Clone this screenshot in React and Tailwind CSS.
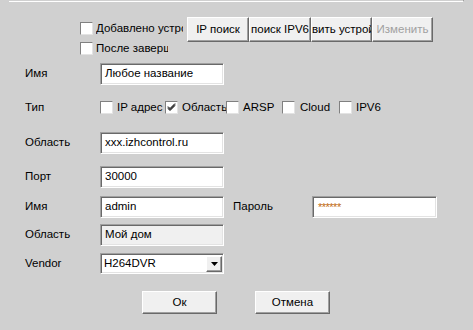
import React from 'react';

const sunken =
  'border border-t-[#a0a0a0] border-l-[#a0a0a0] border-r-white border-b-white shadow-[inset_1px_1px_0_#696969,inset_-1px_-1px_0_#e3e3e3]';
const raised =
  'bg-[#f0f0f0] border border-t-white border-l-white border-r-[#696969] border-b-[#696969] shadow-[inset_-1px_-1px_0_#a0a0a0]';

function Box({ checked = false }) {
  return (
    <span className="relative w-[13px] h-[13px] shrink-0 bg-white border border-t-[#808080] border-l-[#808080] border-r-[#e3e3e3] border-b-[#e3e3e3]">
      {checked && (
        <svg className="absolute left-[1px] top-[1px]" width="9" height="9" viewBox="0 0 9 9">
          <path d="M1 3.5 L3 5.5 L8 0.5 M1 4.5 L3 6.5 L8 1.5 M1 5.5 L3 7.5 L8 2.5" stroke="#000" strokeWidth="1" fill="none" />
        </svg>
      )}
    </span>
  );
}

function Field({ value, w = 'w-[124px]', bg = 'bg-white', h = 'h-[22px]' }) {
  return (
    <div className={`${w} ${h} ${bg} ${sunken} flex items-center pl-[4px] text-black whitespace-nowrap overflow-hidden`}>
      {value}
    </div>
  );
}

function Btn({ label, w, disabled = false, h = 'h-[25px]' }) {
  return (
    <div
      className={`${w} ${h} ${raised} flex items-center justify-center overflow-hidden whitespace-nowrap ${
        disabled ? 'text-[#a0a0a0]' : 'text-black'
      }`}
    >
      {label}
    </div>
  );
}

function Row({ label, children, className = '' }) {
  return (
    <div className={`flex items-center h-[22px] ${className}`}>
      <div className="w-[100px] pl-[25px] text-black">{label}</div>
      {children}
    </div>
  );
}

export default function App() {
  return (
    <div className="w-[473px] h-[330px] bg-[#d0d0d0] overflow-hidden font-['Liberation_Sans',Arial,sans-serif] text-[11.5px] leading-none">
      <div className="ml-[9px] w-[455px] h-[2px] border-b border-b-white border-r border-r-[#a0a0a0]" />

      <div className="flex items-start h-[23px] mt-[15px] pl-[80px]">
        <div className="w-[107px] h-[13px] mt-[5px] flex items-center gap-[3px]">
          <Box />
          <span className="w-[87px] overflow-hidden whitespace-nowrap">Добавлено устройство</span>
        </div>
        <Btn label="IP поиск" w="w-[62px]" />
        <Btn label="поиск IPV6" w="w-[62px]" />
        <Btn label="Добавить устройство" w="w-[61px]" />
        <Btn label="Изменить" w="w-[61px]" disabled />
      </div>

      <div className="flex items-center h-[13px] mt-[2px] pl-[80px] gap-[3px]">
        <Box />
        <span className="w-[72px] overflow-hidden whitespace-nowrap">После завершения</span>
      </div>

      <Row label="Имя" className="mt-[8px]">
        <Field value="Любое название" />
      </Row>

      <div className="flex items-center h-[13px] mt-[16px]">
        <div className="w-[100px] pl-[25px]">Тип</div>
        <div className="w-[65px] flex items-center gap-[4px]">
          <Box />
          <span className="whitespace-nowrap">IP адрес</span>
        </div>
        <div className="w-[61px] flex items-center gap-[4px]">
          <Box checked />
          <span className="whitespace-nowrap">Область</span>
        </div>
        <div className="w-[56px] flex items-center gap-[4px]">
          <Box />
          <span>ARSP</span>
        </div>
        <div className="w-[57px] flex items-center gap-[5px]">
          <Box />
          <span>Cloud</span>
        </div>
        <div className="flex items-center gap-[4px]">
          <Box />
          <span>IPV6</span>
        </div>
      </div>

      <Row label="Область" className="mt-[18px]">
        <Field value="xxx.izhcontrol.ru" />
      </Row>

      <Row label="Порт" className="mt-[12px]">
        <Field value="30000" />
      </Row>

      <Row label="Имя" className="mt-[8px]">
        <Field value="admin" />
        <div className="w-[88px] pl-[9px]">Пароль</div>
        <Field value={<span className="text-[11px] text-[#c06a10] tracking-[-0.5px] pl-[1px]">******</span>} w="w-[125px]" />
      </Row>

      <Row label="Область" className="mt-[6px]">
        <Field value="Мой дом" bg="bg-[#f0f0f0]" />
      </Row>

      <div className="flex items-center h-[21px] mt-[7px]">
        <div className="w-[100px] pl-[25px]">Vendor</div>
        <div className={`w-[124px] h-[21px] bg-white ${sunken} flex items-center justify-between pl-[3px] pr-[1px]`}>
          <span>H264DVR</span>
          <div className={`w-[16px] h-[16px] ${raised} flex items-center justify-center`}>
            <svg width="7" height="4" viewBox="0 0 7 4">
              <path d="M0 0 H7 L3.5 4 Z" fill="#000" />
            </svg>
          </div>
        </div>
      </div>

      <div className="flex mt-[17px] pl-[142px] gap-[38px]">
        <Btn label="Ок" w="w-[75px]" h="h-[23px]" />
        <Btn label="Отмена" w="w-[75px]" h="h-[23px]" />
      </div>
    </div>
  );
}
